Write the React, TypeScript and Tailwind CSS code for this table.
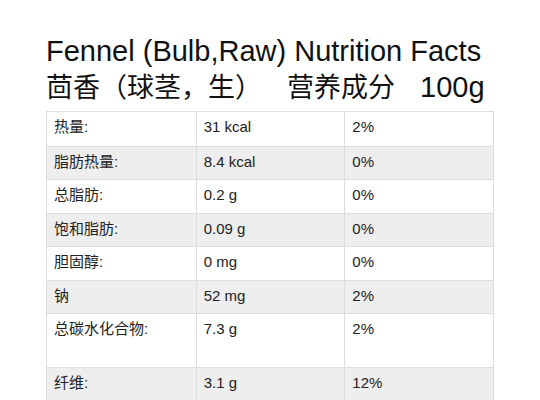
import React from "react";

type Row = { name: string; amount: string; daily: string; tall?: boolean };

const rows: Row[] = [
  { name: "热量:", amount: "31 kcal", daily: "2%" },
  { name: "脂肪热量:", amount: "8.4 kcal", daily: "0%" },
  { name: "总脂肪:", amount: "0.2 g", daily: "0%" },
  { name: "饱和脂肪:", amount: "0.09 g", daily: "0%" },
  { name: "胆固醇:", amount: "0 mg", daily: "0%" },
  { name: "钠", amount: "52 mg", daily: "2%" },
  { name: "总碳水化合物:", amount: "7.3 g", daily: "2%", tall: true },
  { name: "纤维:", amount: "3.1 g", daily: "12%" },
];

const font = "font-['Liberation_Sans','Noto_Sans_CJK_SC',sans-serif]";

export default function App() {
  return (
    <div className={`w-[540px] h-[400px] overflow-hidden bg-white text-[#111] ${font}`}>
      {/* Title */}
      <div className="pl-[46px] pt-[33px]">
        <h1 className="text-[29px] leading-[36px] whitespace-nowrap">
          Fennel (Bulb,Raw) Nutrition Facts
        </h1>
        <div className="text-[29px] leading-[36px] whitespace-nowrap">
          <span className="text-[27px]">茴香（球茎，生）</span>
          <span className="text-[27px] ml-[25px]">营养成分</span>
          <span className="ml-[25px]">100g</span>
        </div>
      </div>

      {/* Table */}
      <div className="ml-[46px] mt-[5px] w-[448px] border border-[#dddddd] text-[15px] leading-[18px] text-[#222]">
        {rows.map((row, i) => (
          <div
            key={row.name}
            className={`grid grid-cols-3 ${i > 0 ? "border-t border-[#dddddd]" : ""} ${
              i % 2 === 1 ? "bg-[#eeeeee]" : "bg-white"
            } ${row.tall ? "h-[54px]" : "h-[33.5px]"}`}
          >
            <div className="pl-[7px] pt-[6px]">{row.name}</div>
            <div className="pl-[7px] pt-[6px] border-l border-[#dddddd]">{row.amount}</div>
            <div className="pl-[7px] pt-[6px] border-l border-[#dddddd]">{row.daily}</div>
          </div>
        ))}
      </div>
    </div>
  );
}
